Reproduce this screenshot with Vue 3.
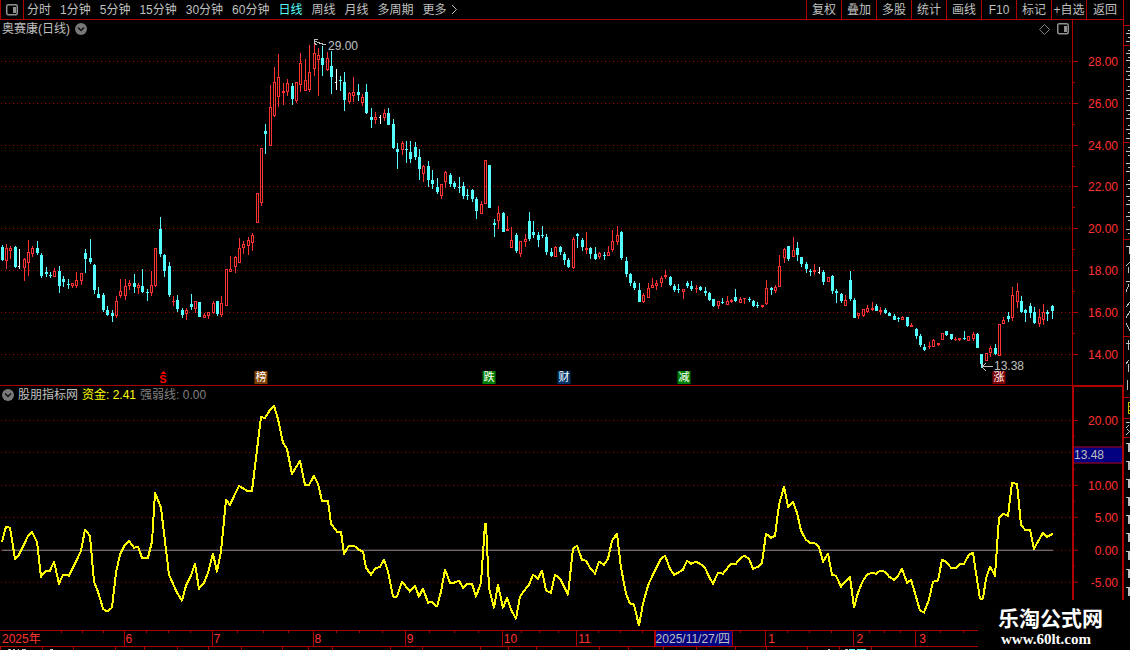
<template>
  <div class="terminal">
    <div class="main">
      <!-- 顶部工具栏：周期切换 + 功能按钮 -->
      <header class="toolbar">
        <button class="layout-btn" aria-label="布局">
          <svg class="icon-panel" width="12" height="12" viewBox="0 0 12 12">
            <rect x="0.75" y="0.75" width="10.5" height="10" rx="1.5" />
            <path d="M7 3h3v6h-3z" />
          </svg>
        </button>
        <nav class="periods">
          <button
            v-for="item in periods"
            :key="item"
            :class="['period-btn', { active: item === activePeriod }]"
            @click="activePeriod = item"
          >{{ item }}</button>
          <button class="period-btn more-btn">
            更多
            <svg width="7" height="11" viewBox="0 0 7 11"><path d="M1 1l4.5 4.5L1 10" /></svg>
          </button>
        </nav>
        <div class="tools">
          <button v-for="tool in tools" :key="tool" class="tool-btn">{{ tool }}</button>
        </div>
      </header>

      <!-- K线主图 -->
      <section class="panel price-panel">
        <div class="plot">
          <svg class="canvas" viewBox="0 20 1072 365" preserveAspectRatio="none">
            <path class="grid" :d="gridPath(priceLabels, 1)" />
            <path class="candle-up" :d="upPath" />
            <path class="candle-down" :d="downPath" />
            <path class="candle-flat" :d="flatPath" />
            <path class="arrow" d="M326 44.500h-2l-3-1-3-1-3.500-2M318 39.500h-3.500v4l2 1" />
            <path class="arrow" d="M993 366.500h-11M986 362.500l-4 4 4 4M982.500 363v4" />
          </svg>
          <div class="plot-head">
            <span>奥赛康(日线)</span>
            <button class="round-btn" aria-label="展开">
              <svg width="12" height="12" viewBox="0 0 12 12">
                <circle cx="6" cy="6" r="6" />
                <path d="M3 4.500l3 3 3-3" />
              </svg>
            </button>
            <div class="plot-icons">
              <svg class="icon-diamond" width="11" height="11" viewBox="0 0 11 11">
                <path d="M5.500 0.500l5 5-5 5-5-5z" />
              </svg>
              <svg class="icon-panel" width="12" height="12" viewBox="0 0 12 12">
                <rect x="0.75" y="0.75" width="10.5" height="10" rx="1.5" />
                <path d="M7 3h3v6h-3z" />
              </svg>
            </div>
          </div>
          <span
            v-for="mark in priceMarks"
            :key="mark.text"
            class="price-mark"
            :style="{ left: toPercent(mark.x, 1072), top: toPercent(mark.y - 20, 365) }"
          >{{ mark.text }}</span>
          <span
            v-for="event in events"
            :key="event.x"
            :class="['event', event.type]"
            :style="{ left: toPercent(event.x, 1072) }"
          >{{ event.text }}</span>
        </div>
        <div class="axis">
          <svg class="canvas" viewBox="0 20 50 365" preserveAspectRatio="none">
            <path class="tick" :d="tickPath(priceLabels, 5) + tickPath(priceMinor, 2)" />
          </svg>
          <span
            v-for="label in priceLabels"
            :key="label.text"
            class="axis-label"
            :style="{ top: toPercent(label.y - 19, 365) }"
          >{{ label.text }}</span>
        </div>
      </section>

      <!-- 资金副图 -->
      <section class="panel fund-panel">
        <div class="plot">
          <svg class="canvas" viewBox="0 386 1072 244" preserveAspectRatio="none">
            <path class="grid" :d="gridPath(fundGrid, 1)" />
            <path class="zero-line" d="M2 550.500H1053" />
            <polyline class="fund-line" :points="fundLine" />
          </svg>
          <div class="plot-head">
            <button class="round-btn" aria-label="展开">
              <svg width="12" height="12" viewBox="0 0 12 12">
                <circle cx="6" cy="6" r="6" />
                <path d="M3 4.500l3 3 3-3" />
              </svg>
            </button>
            <span>股朋指标网</span>
            <span class="fund-value">资金: 2.41</span>
            <span class="weak-value">强弱线: 0.00</span>
          </div>
        </div>
        <div class="axis fund-axis">
          <svg class="canvas" viewBox="0 387 48 243" preserveAspectRatio="none">
            <path class="tick" :d="tickPath(fundLabels, 4) + tickPath(fundMinor, 1)" />
          </svg>
          <span
            v-for="label in fundLabels"
            :key="label.text"
            class="axis-label"
            :style="{ top: toPercent(label.y - 386, 243) }"
          >{{ label.text }}</span>
          <span class="cursor-value" :style="{ top: toPercent(454.5 - 387, 243) }">13.48</span>
        </div>
      </section>

      <!-- 时间轴 -->
      <footer class="timeline">
        <svg class="canvas" viewBox="0 630 1123 20" preserveAspectRatio="none">
          <path class="tick" :d="timePath" />
          <path class="ticker" d="M8 649.500h3M13 649.500h2M18 648.500v2M22 649.500h4M50 649.500h3M828 649.500h2M845 649.500h3" />
          <path class="ticker cyan" d="M849 649.500h6M857 649.500h9" />
        </svg>
        <div class="months">
          <span
            v-for="month in months"
            :key="month.text"
            :class="['month', { cursor: month.cursor }]"
            :style="{ flexGrow: month.width }"
          >{{ month.text }}</span>
        </div>
      </footer>
    </div>

    <!-- 右侧盘口边缘 -->
    <aside class="side">
      <svg class="canvas" viewBox="1124 0 6 650" preserveAspectRatio="none">
        <path class="tick" d="M1124 25.500h6M1124 45.500h6M1124 142.500h6M1124 239.500h6M1124 336.500h6M1124 397.500h6M1124 418.500h6M1124 437.500h6" />
        <path class="quote" :d="quotePath" />
        <path class="quote yellow" d="M1130 402.500h-1.500v11h1.500M1129 406.500h1M1129 410.500h1" />
        <path class="volume" :d="volumePath" />
      </svg>
    </aside>

    <div class="watermark">
      <strong>乐淘公式网</strong>
      <a href="#">www.60lt.com</a>
    </div>
  </div>
</template>

<script setup>
import { ref } from 'vue'

const periods = ['分时', '1分钟', '5分钟', '15分钟', '30分钟', '60分钟', '日线', '周线', '月线', '多周期']
const tools = ['复权', '叠加', '多股', '统计', '画线', 'F10', '标记', '+自选', '返回']
const activePeriod = ref('日线')

// ==================== 坐标轴 ====================
const priceLabels = [
  { text: '28.00', y: 61 },
  { text: '26.00', y: 103 },
  { text: '24.00', y: 145 },
  { text: '22.00', y: 186 },
  { text: '20.00', y: 228 },
  { text: '18.00', y: 270 },
  { text: '16.00', y: 312 },
  { text: '14.00', y: 354 }
]
const priceMinor = [82, 124, 166, 207, 249, 291, 333].map(y => ({ y }))

const fundLabels = [
  { text: '20.00', y: 420 },
  { text: '10.00', y: 485 },
  { text: '5.00', y: 517 },
  { text: '0.00', y: 550 },
  { text: '-5.00', y: 582 }
]
const fundMinor = [436, 469, 501, 534, 566].map(y => ({ y }))
const fundGrid = [...fundLabels, { y: 452 }]

const months = [
  { text: '2025年', width: 124 },
  { text: '6', width: 88 },
  { text: '7', width: 101 },
  { text: '8', width: 92 },
  { text: '9', width: 97 },
  { text: '10', width: 74 },
  { text: '11', width: 78 },
  { text: '2025/11/27/四', width: 78, cursor: true },
  { text: '', width: 33 },
  { text: '1', width: 88 },
  { text: '2', width: 62 },
  { text: '3', width: 208 }
]
const weekTicks = [61, 82, 103, 146, 168, 190, 237, 263, 288, 336, 359, 382, 429, 454, 478, 521, 539, 558, 598, 620, 642, 740, 787, 809, 831, 869, 884, 900, 940, 963]
const bottomTicks = [0, 42, 73, 115, 144, 177, 208, 241, 282, 308, 332, 390, 422, 480, 508, 536, 599, 628, 663, 696, 735, 766, 807, 839, 871]

// ==================== 标注 ====================
const priceMarks = [
  { text: '29.00', x: 328, y: 46 },
  { text: '13.38', x: 994, y: 366 }
]
const events = [
  { text: 'S', x: 163, type: 'signal' },
  { text: '榜', x: 261, type: 'brown' },
  { text: '跌', x: 489, type: 'green' },
  { text: '财', x: 564, type: 'blue' },
  { text: '减', x: 684, type: 'green' },
  { text: '涨', x: 999, type: 'maroon' }
]

// ==================== K线数据 ====================
// 每项：方向 x 最高 实体上沿 实体下沿 最低（u 涨 / d 跌 / f 平）
const candles = `
d 2 245 247 260 261,u 6 244 248 261 269,u 10 246 248 251 259,d 15 246 247 267 268,f 19 249 266 267 269,
u 24 258 259 268 281,u 28 240 252 263 276,u 32 246 248 254 257,d 37 241 248 253 255,d 41 253 255 276 278,
d 46 267 272 274 277,d 50 272 275 276 278,u 54 268 271 277 277,d 59 266 271 286 293,d 63 276 279 282 287,
d 68 279 284 285 289,u 72 283 283 286 288,u 76 272 280 286 288,u 81 273 273 281 285,d 85 249 253 259 273,
d 90 239 258 262 264,d 94 264 265 290 294,d 98 287 294 298 298,d 103 293 295 310 312,d 107 306 310 315 316,
d 112 310 313 316 322,u 116 296 301 316 318,u 120 279 291 296 298,u 125 279 286 296 300,u 129 280 283 286 290,
d 134 274 283 287 293,u 138 283 285 288 294,d 142 269 286 292 293,d 147 289 292 293 301,u 151 271 285 293 296,
u 155 248 248 286 287,d 160 217 229 254 257,d 164 254 255 271 277,d 169 262 266 295 297,u 173 296 301 302 306,
d 177 295 300 309 312,d 182 308 310 315 318,u 186 308 310 314 320,d 191 294 304 307 310,u 195 301 301 309 313,
d 199 302 302 317 317,u 204 313 315 318 318,u 208 312 312 316 319,u 213 301 303 313 314,d 217 301 301 314 316,
u 221 296 303 315 317,u 226 269 269 306 306,u 230 256 269 272 272,u 235 256 257 267 273,u 239 238 248 263 263,
u 243 241 244 248 254,u 248 237 240 246 255,u 252 233 235 243 251,u 257 193 193 223 223,u 261 148 148 203 206,
d 265 124 131 134 154,u 270 85 107 146 146,u 274 67 82 116 117,u 278 54 77 97 107,u 283 83 91 93 105,
u 287 79 83 92 96,d 292 83 86 99 105,u 296 82 82 101 103,u 300 53 63 85 92,u 305 59 80 91 91,
u 309 45 72 90 92,u 314 43 53 69 76,u 318 48 55 60 96,d 322 46 58 65 76,u 327 52 58 70 71,
d 331 51 66 77 94,f 336 69 82 83 90,d 340 76 80 81 91,d 344 72 82 100 111,u 349 92 93 102 104,
u 353 77 92 96 102,d 358 84 92 95 101,u 362 94 97 103 106,d 366 84 92 113 114,d 371 108 117 120 128,
u 375 112 117 120 124,f 380 115 117 118 124,u 384 109 113 118 121,d 388 108 113 125 125,d 393 119 124 148 149,
d 397 143 149 152 169,u 402 141 143 150 155,d 406 141 149 150 163,d 410 141 152 159 163,d 415 142 147 157 160,
d 419 149 157 169 180,u 423 165 166 174 182,d 428 161 166 180 187,d 432 170 180 184 189,d 437 178 187 192 194,
u 441 184 184 196 199,u 445 171 172 182 188,d 450 173 175 184 187,d 454 181 183 187 189,d 459 177 187 188 193,
d 463 182 186 196 199,d 467 189 195 196 200,d 472 189 190 199 202,d 476 197 199 211 219,u 481 201 204 214 214,
u 485 160 160 204 204,d 489 165 165 208 208,d 494 219 223 225 237,u 498 206 213 221 229,d 503 212 213 232 232,
u 507 216 229 231 231,u 511 227 240 248 248,d 516 233 235 251 253,u 520 241 241 254 257,u 525 234 239 242 247,
d 529 212 221 239 241,d 533 221 232 235 238,d 538 232 235 240 247,d 542 226 235 236 238,d 546 234 237 252 255,
d 551 248 252 256 257,u 555 246 247 257 257,d 560 246 247 252 255,d 564 252 254 260 265,d 568 258 260 267 268,
u 573 237 239 268 269,d 577 233 234 236 248,d 582 238 240 247 251,u 586 232 248 250 254,d 590 247 248 254 259,
d 595 247 254 259 260,u 599 252 253 257 259,d 604 252 255 256 260,u 608 246 252 256 256,u 612 230 241 250 252,
u 617 226 235 242 245,d 621 231 232 258 260,d 626 257 261 274 277,d 630 273 274 283 286,d 634 281 283 288 290,
d 639 283 290 302 302,u 643 293 295 302 303,u 648 283 288 298 298,u 652 278 285 288 288,u 656 280 283 286 290,
u 661 276 278 283 287,u 665 270 275 277 279,d 670 276 277 285 286,d 674 284 286 290 292,d 678 284 289 290 293,
u 683 289 289 292 299,d 687 281 283 286 288,d 691 281 286 289 291,u 696 285 288 289 293,d 700 286 287 290 291,
d 705 287 291 293 296,d 709 292 293 300 301,d 713 299 299 306 307,u 718 301 301 306 309,d 722 298 302 303 304,
u 727 296 301 305 305,u 731 299 300 302 303,d 735 289 297 301 302,u 740 297 299 303 303,u 744 298 298 299 304,
d 749 297 299 300 302,d 753 300 301 306 307,d 757 302 305 306 308,u 762 305 305 307 308,u 766 280 288 304 305,
d 771 287 288 290 295,u 775 285 287 291 293,u 779 255 266 287 287,u 784 248 249 258 263,d 788 246 246 259 261,
u 793 237 250 257 257,d 797 242 248 255 261,d 801 257 257 264 267,d 806 262 264 269 273,d 810 269 271 272 276,
u 814 264 270 272 275,f 819 267 272 273 274,d 823 270 272 282 285,u 828 277 277 282 282,d 832 275 276 291 294,
d 836 289 291 293 303,d 841 293 294 301 303,u 845 295 300 306 306,d 850 271 280 299 301,d 854 298 300 318 318,
u 858 313 313 316 319,u 863 309 309 316 317,u 867 305 308 312 313,u 872 302 308 310 311,d 876 304 306 311 311,
u 880 307 310 312 315,d 885 308 310 313 314,d 889 312 313 316 316,d 894 314 316 320 320,d 898 317 318 319 322,
u 902 316 317 320 320,d 907 317 317 326 327,u 911 323 325 327 327,d 916 328 329 336 339,d 920 334 336 345 347,
d 924 344 347 350 351,u 929 342 346 347 349,u 933 339 340 347 347,u 938 343 343 345 346,u 942 333 333 340 340,
d 946 331 331 335 336,d 951 334 334 339 340,u 955 337 339 340 341,u 959 338 338 340 341,d 964 331 338 339 340,
u 968 336 336 341 341,u 973 332 334 339 341,d 977 333 334 348 348,d 981 354 354 364 368,u 986 353 353 361 361,
u 990 346 348 353 357,d 995 344 348 354 355,u 999 324 324 356 356,u 1003 317 320 324 324,d 1008 312 316 319 322,
u 1012 287 295 318 321,u 1017 283 291 302 308,d 1021 296 301 312 313,d 1025 309 310 313 322,d 1030 303 306 313 318,
d 1034 307 312 323 324,u 1039 309 317 324 327,u 1043 304 312 320 325,d 1047 310 312 314 321,d 1052 305 306 311 319
`.trim().split(/,\s*/).map(row => {
  const [type, ...values] = row.split(' ')
  const [x, high, top, bottom, low] = values.map(Number)
  return { type, x, high, top, bottom, low }
})

// 阳线空心，阴线实心，平盘画十字
const bar = (x, y1, y2, w) => (y2 > y1 ? `M${x} ${y1}h${w}V${y2}h${-w}z` : '')

const upPath = candles.filter(c => c.type === 'u').map(({ x, high, top, bottom, low }) => {
  const wicks = bar(x, high, top, 1) + bar(x, bottom, low, 1)
  if (bottom - top < 3) return wicks + bar(x - 1, top, bottom, 3)
  return wicks + bar(x - 1, top, bottom, 1) + bar(x + 1, top, bottom, 1) +
    bar(x, top, top + 1, 1) + bar(x, bottom - 1, bottom, 1)
}).join('')

const downPath = candles.filter(c => c.type === 'd')
  .map(c => bar(c.x, c.high, c.low, 1) + bar(c.x - 1, c.top, c.bottom, 3)).join('')

const flatPath = candles.filter(c => c.type === 'f')
  .map(c => bar(c.x, c.high, c.low, 1) + bar(c.x - 1, c.top, c.bottom, 2)).join('')

// ==================== 资金线 ====================
const fundLine = `
2,542 6,527 10,528 15,559 19,555 24,545 28,536 32,532 37,542 41,577 46,571 50,571 54,562 59,584 63,575 69,576
76,562 81,551 85,530 90,536 94,582 98,592 103,609 107,612 112,608 116,573 120,555 125,545 129,541 134,548 138,547
142,558 148,558 152,542 155,493 161,508 169,575 177,593 182,601 186,586 191,576 195,564 199,589 204,583 208,573
213,554 217,572 221,552 226,500 230,505 239,486 247,491 252,491 261,417 265,418 270,410 274,406 278,419 283,443
287,449 292,474 300,461 305,485 309,485 314,476 318,484 322,501 328,501 331,524 337,532 341,532 344,554 349,546
354,546 359,550 363,552 366,568 371,575 375,569 380,567 384,560 388,572 393,597 397,597 402,582 410,592 415,586
419,597 423,589 428,603 432,602 437,607 441,592 445,570 450,583 454,583 459,581 463,588 467,584 472,584 476,597
481,583 485,524 486,524 489,588 494,608 498,585 503,608 507,598 511,610 516,619 520,597 525,590 529,585 533,575
538,579 542,571 546,591 551,593 555,575 560,579 564,587 568,595 573,549 577,546 582,560 586,561 590,568 595,574
599,562 604,565 608,559 612,541 617,534 621,568 626,594 630,604 634,605 639,626 643,604 648,586 652,577 656,569
661,559 665,556 670,569 674,575 678,573 683,570 687,561 691,564 696,562 700,564 705,568 709,577 713,584 718,573
723,574 731,564 736,564 740,559 744,556 749,559 753,569 758,567 762,563 766,534 771,538 775,536 779,505 784,487
788,507 793,502 797,513 801,531 806,540 810,543 814,543 819,547 823,562 828,554 832,575 836,576 841,587 845,582
850,577 854,608 858,593 863,581 867,575 872,573 876,574 880,571 885,572 889,577 894,580 898,576 902,569 907,583
911,580 916,597 920,611 924,613 929,600 933,582 938,581 942,560 946,562 951,568 956,568 960,564 964,564 969,555
973,553 977,580 980,599 983,599 986,579 990,567 995,576 999,518 1003,514 1008,516 1012,483 1017,484 1021,525
1025,530 1030,530 1034,549 1039,540 1043,533 1047,537 1053,534
`.trim()

// ==================== 路径工具 ====================
const toPercent = (value, total) => `${(value / total) * 100}%`
const gridPath = (rows, start) => rows.map(({ y }) => `M${start} ${y + 0.5}H1072`).join('')
const tickPath = (rows, length) => rows.map(({ y }) => `M0 ${y + 0.5}h${length}`).join('')

const monthStarts = [124, 212, 313, 405, 502, 576, 654, 732, 765, 853, 915]
const timePath = 'M0 630.5H1123M0 646.5H1123' +
  monthStarts.map(x => `M${x + 0.5} 631v15`).join('') +
  weekTicks.map(x => `M${x + 0.5} 631v2`).join('') +
  bottomTicks.map(x => `M${x + 0.5} 647v3`).join('')

// 盘口文字与成交量只露出左侧一点
const quoteRows = [30, 33, 37, 41, 50, 53, 57, 60, 67, 71, 75, 79, 86, 90, 94, 98, 105, 110, 114, 118, 125, 129, 133, 138,
  147, 151, 155, 163, 167, 171, 180, 184, 188, 196, 200, 204, 212, 216, 220, 229, 233]
const quotePath = quoteRows.map((y, i) => `M${i % 2 ? 1126 : 1128} ${y + 0.5}H1130`).join('') +
  'M1126 246.500h4M1129 246v8M1130 262l-4 4M1128 267v6M1126 281h4M1129 284l-3 8M1130 302l-4 5M1130 311l-4 7M1126 323l4 8' +
  'M1126 343h4M1128.500 340v10M1129 360l-3 4M1128.500 364v8M1127.500 380v10' +
  'M1126 422.500h4M1129 425l-3 3M1127 429l3 3M1129 432l-3 3'
const volumePath = Array.from({ length: 9 }, (_, i) => `M1126 ${443 + i * 18}h4v9h-2v-8h-2z`).join('')
</script>

<style>
body {
  background: #000000;
}
</style>

<style scoped>
.terminal {
  position: relative;
  display: flex;
  min-height: 100vh;
  background: #000000;
  color: #c0c0c0;
  font-family: 'Liberation Sans', 'Noto Sans CJK SC', sans-serif;
  font-size: 12px;
  line-height: 14px;
  overflow: hidden;
}

.main {
  flex: 1;
  min-width: 0;
  display: flex;
  flex-direction: column;
}

button {
  padding: 0;
  border: none;
  background: none;
  color: inherit;
  font: inherit;
  white-space: nowrap;
  cursor: pointer;
}

svg {
  display: block;
  fill: none;
}

.canvas {
  position: absolute;
  inset: 0;
  width: 100%;
  height: 100%;
  shape-rendering: crispEdges;
}

/* 工具栏 */
.toolbar {
  display: flex;
  height: 19px;
  border-bottom: 1px solid #b00000;
}

.layout-btn {
  display: flex;
  align-items: center;
  justify-content: center;
  width: 24px;
  border-left: 1px solid #b00000;
  border-right: 1px solid #b00000;
}

.icon-panel rect {
  stroke: #909090;
  stroke-width: 1.5;
}

.icon-panel path {
  fill: #909090;
}

.periods {
  flex: 1;
  display: flex;
  gap: 9px;
  padding-left: 3px;
}

.period-btn.active {
  color: #54ffff;
}

.more-btn {
  display: flex;
  align-items: center;
  gap: 4px;
}

.more-btn path {
  stroke: #c0c0c0;
}

.tools {
  display: flex;
}

.tool-btn {
  width: 35px;
  border-left: 1px solid #b00000;
}

.tool-btn:last-child {
  width: 37px;
}

/* 图表面板 */
.panel {
  display: flex;
  min-height: 0;
}

.price-panel {
  flex: 366 1 0;
  box-sizing: border-box;
  border-bottom: 1px solid #b00000;
}

.fund-panel {
  flex: 244 1 0;
}

.plot {
  position: relative;
  flex: 1;
  min-width: 0;
}

.plot-head {
  position: relative;
  display: flex;
  align-items: center;
  gap: 5px;
  height: 18px;
  padding-left: 2px;
}

.round-btn circle {
  fill: #787878;
}

.round-btn path {
  stroke: #101010;
  stroke-width: 1.5;
}

.plot-icons {
  display: flex;
  align-items: center;
  gap: 7px;
  margin-left: auto;
  padding-right: 3px;
}

.icon-diamond path {
  stroke: #808080;
}

.fund-panel .plot-head {
  gap: 4px;
}

.fund-value {
  color: #ffff00;
}

.weak-value {
  color: #808080;
}

.grid {
  stroke: #b00000;
  stroke-dasharray: 1 3;
}

.tick {
  stroke: #b00000;
}

.candle-up {
  fill: #ff3232;
}

.candle-down {
  fill: #54ffff;
}

.candle-flat {
  fill: #ffffff;
}

.arrow {
  stroke: #c0c0c0;
}

.zero-line {
  stroke: #909090;
}

.fund-line {
  stroke: #ffff00;
  stroke-width: 2;
  stroke-linejoin: round;
}

.price-mark {
  position: absolute;
  line-height: 10px;
  transform: translateY(-50%);
}

/* 事件标记 */
.event {
  position: absolute;
  bottom: 1px;
  width: 13px;
  height: 13px;
  font-size: 11px;
  line-height: 13px;
  color: #ffffff;
  text-align: center;
  transform: translateX(-50%);
}

.event.brown {
  background: #804000;
}

.event.green {
  background: #008000;
}

.event.blue {
  background: #003468;
}

.event.maroon {
  background: #800000;
}

.event.signal {
  display: flex;
  flex-direction: column;
  align-items: center;
  color: #ff0000;
  font-weight: 700;
  line-height: 10px;
}

.event.signal::before {
  content: '';
  border: 3px solid transparent;
  border-top: none;
  border-bottom-color: #ff0000;
}

/* 坐标轴 */
.axis {
  position: relative;
  box-sizing: border-box;
  width: 51px;
  border-left: 1px solid #b00000;
  color: #ff3232;
}

.fund-axis {
  border-top: 1px solid #b00000;
  border-left-width: 2px;
  border-right: 1px solid #b00000;
}

.axis-label {
  position: absolute;
  right: 5px;
  transform: translateY(-50%);
}

.fund-axis .axis-label {
  right: 4px;
}

.cursor-value {
  position: absolute;
  left: 0;
  right: 0;
  height: 15px;
  border-top: 1px solid #b00000;
  border-bottom: 1px solid #b00000;
  background: #000080;
  color: #c0c0c0;
  transform: translateY(-50%);
}

.timeline {
  position: relative;
  height: 20px;
  color: #ff3232;
}

.months {
  position: relative;
  display: flex;
  padding-top: 1px;
}

.month {
  flex: 0 1 0;
  box-sizing: border-box;
  min-width: 0;
  height: 15px;
  padding-left: 2px;
  line-height: 16px;
  white-space: nowrap;
}

.month.cursor {
  border-left: 1px solid #b00000;
  padding-left: 0;
  background: #000080;
  color: #c0c0c0;
}

/* 右侧边缘 */
.side {
  position: relative;
  width: 6px;
  border-left: 1px solid #b00000;
}

.quote {
  stroke: #c0c0c0;
}

.quote.yellow {
  stroke: #c0c000;
}

.volume {
  fill: #c0c0c0;
}

.ticker {
  stroke: #c0c0c0;
}

.ticker.cyan {
  stroke: #54ffff;
}

/* 站点水印 */
.watermark {
  position: absolute;
  right: 0;
  bottom: 0;
  box-sizing: border-box;
  width: 152px;
  height: 50px;
  padding: 8px 0 0 20px;
  background: #000000;
  color: #ffffff;
}

.watermark strong {
  display: block;
  font-size: 21px;
  line-height: 22px;
}

.watermark a {
  display: block;
  padding-left: 3px;
  color: inherit;
  font-family: 'Liberation Serif', serif;
  font-size: 15px;
  font-weight: 700;
  line-height: 18px;
  text-decoration: none;
}
</style>
